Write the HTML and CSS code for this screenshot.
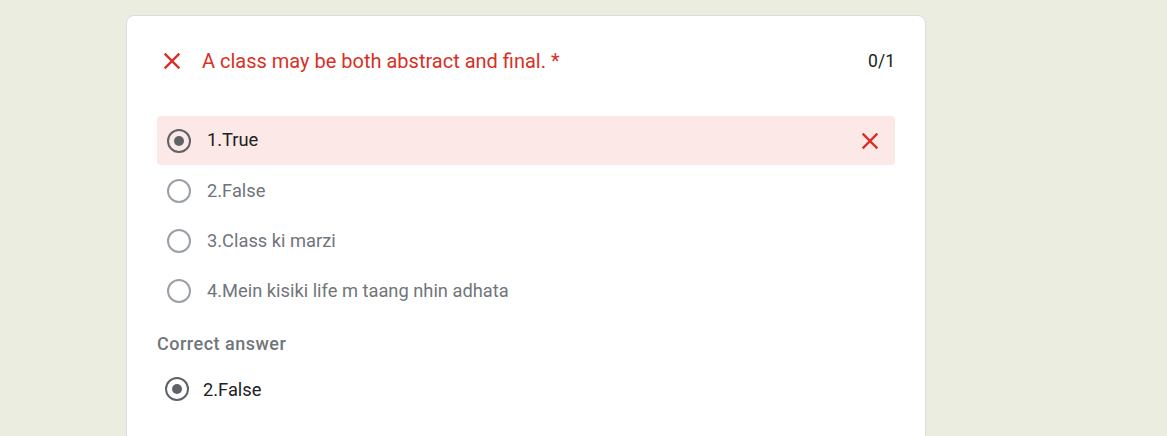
FILE: index.html
```html
<!DOCTYPE html>
<html>
<head>
<meta charset="utf-8">
<link rel="stylesheet" href="styles.css">
</head>
<body>
<div class="card">
  <div class="header">
    <svg class="hx" width="28" height="28" viewBox="0 0 24 24"><path d="M19 6.41L17.59 5 12 10.59 6.41 5 5 6.41 10.59 12 5 17.59 6.41 19 12 13.41 17.59 19 19 17.59 13.41 12z" fill="#d93025"/></svg>
    <div class="title">A class may be both abstract and final. <span>*</span></div>
    <div class="score">0/1</div>
  </div>
  <div class="options">
    <div class="opt wrong">
      <span class="radio on"></span>
      <span class="label sel">1.True</span>
      <svg class="rx" width="28" height="28" viewBox="0 0 24 24"><path d="M19 6.41L17.59 5 12 10.59 6.41 5 5 6.41 10.59 12 5 17.59 6.41 19 12 13.41 17.59 19 19 17.59 13.41 12z" fill="#d93025"/></svg>
    </div>
    <div class="opt"><span class="radio"></span><span class="label">2.False</span></div>
    <div class="opt"><span class="radio"></span><span class="label">3.Class ki marzi</span></div>
    <div class="opt"><span class="radio"></span><span class="label">4.Mein kisiki life m taang nhin adhata</span></div>
  </div>
  <div class="correct-title">Correct answer</div>
  <div class="correct-opt"><span class="radio on"></span><span class="label sel">2.False</span></div>
</div>
</body>
</html>
```
FILE: styles.css
```css
html, body { margin: 0; padding: 0; }
body {
  background: #ebede0;
  font-family: Roboto, "Liberation Sans", sans-serif;
  height: 436px;
  overflow: hidden;
}
.card {
  margin: 15px 0 0 126px;
  width: 800px;
  height: 500px;
  background: #fff;
  border: 1px solid #dadce0;
  border-radius: 8px;
  box-sizing: border-box;
  padding: 0 30px;
}
.header {
  display: flex;
  align-items: center;
  height: 46px;
  margin-top: 22px;
  padding-left: 1px;
}
.hx { flex: none; margin-right: 16px; }
.title {
  flex: 1;
  color: #d93025;
  font-size: 20px;
}
.score {
  font-size: 17.5px;
  color: #202124;
}
.options { margin-top: 32px; }
.opt {
  display: flex;
  align-items: center;
  height: 50px;
  padding-left: 10px;
  border-radius: 4px;
}
.opt.wrong { background: #fce8e6; height: 49px; margin-bottom: 1px; }
.opt .label { position: relative; top: -1px; }
.radio {
  flex: none;
  width: 20px;
  height: 20px;
  border: 2px solid #9aa0a6;
  border-radius: 50%;
  box-sizing: content-box;
  position: relative;
  margin-right: 16px;
}
.radio.on { border-color: #5f6368; }
.radio.on::after {
  content: "";
  position: absolute;
  left: 5px; top: 5px;
  width: 10px; height: 10px;
  border-radius: 50%;
  background: #5f6368;
}
.label { font-size: 18.3px; color: #70757a; flex: 1; }
.label.sel { color: #202124; }
.rx { flex: none; margin-right: 11px; }
.correct-title {
  margin-top: 17px;
  font-size: 18px;
  font-weight: 500;
  letter-spacing: 0.5px;
  color: #70757a;
  height: 20px;
}
.correct-opt {
  display: flex;
  align-items: center;
  height: 50px;
  margin-top: 11px;
  padding-left: 8px;
}
.correct-opt .radio { margin-right: 14px; }
```
